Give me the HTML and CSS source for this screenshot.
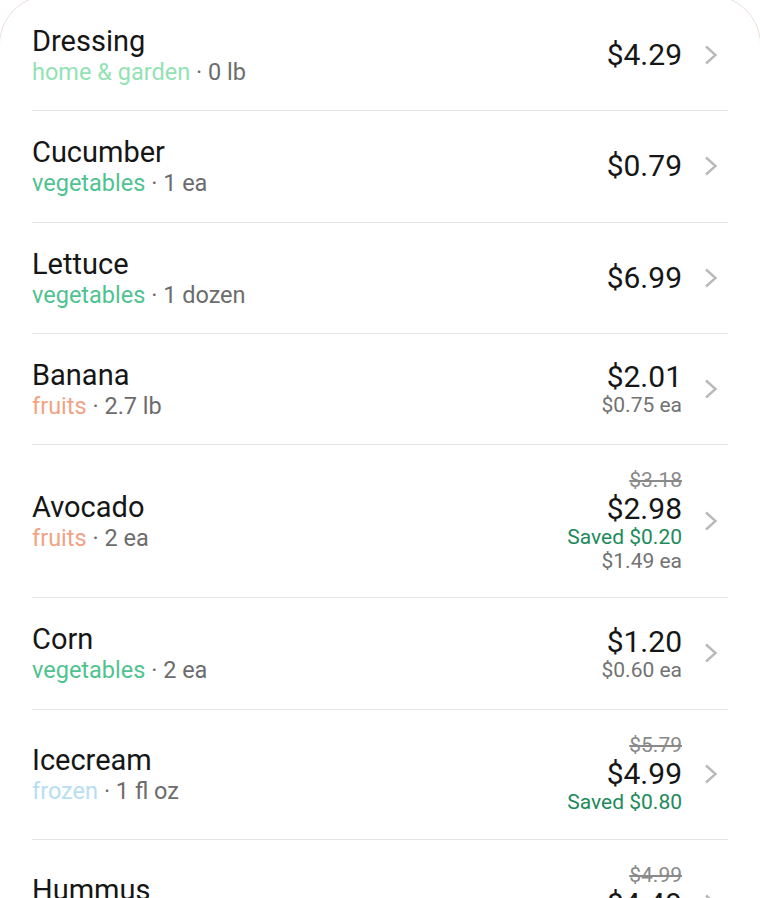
FILE: index.html
```html
<!DOCTYPE html>
<html lang="en">
<head>
  <meta charset="UTF-8">
  <meta name="viewport" content="width=device-width, initial-scale=1.0">
  <title>Shopping List</title>
  <link rel="stylesheet" href="styles.css">
</head>
<body>
  <div class="sheet">
    <ul class="list">
      <!-- Dressing -->
      <li class="item">
        <div class="info">
          <div class="name">Dressing</div>
          <div class="meta"><span class="cat cat-home">home &amp; garden</span> · 0 lb</div>
        </div>
        <div class="price">
          <div class="total">$4.29</div>
        </div>
        <svg class="chevron" viewBox="0 0 24 24"><polyline points="7,3.5 16.5,12 7,20.5"/></svg>
      </li>

      <!-- Cucumber -->
      <li class="item">
        <div class="info">
          <div class="name">Cucumber</div>
          <div class="meta"><span class="cat cat-veg">vegetables</span> · 1 ea</div>
        </div>
        <div class="price">
          <div class="total">$0.79</div>
        </div>
        <svg class="chevron" viewBox="0 0 24 24"><polyline points="7,3.5 16.5,12 7,20.5"/></svg>
      </li>

      <!-- Lettuce -->
      <li class="item">
        <div class="info">
          <div class="name">Lettuce</div>
          <div class="meta"><span class="cat cat-veg">vegetables</span> · 1 dozen</div>
        </div>
        <div class="price">
          <div class="total">$6.99</div>
        </div>
        <svg class="chevron" viewBox="0 0 24 24"><polyline points="7,3.5 16.5,12 7,20.5"/></svg>
      </li>

      <!-- Banana -->
      <li class="item">
        <div class="info">
          <div class="name">Banana</div>
          <div class="meta"><span class="cat cat-fruit">fruits</span> · 2.7 lb</div>
        </div>
        <div class="price">
          <div class="total">$2.01</div>
          <div class="unit">$0.75 ea</div>
        </div>
        <svg class="chevron" viewBox="0 0 24 24"><polyline points="7,3.5 16.5,12 7,20.5"/></svg>
      </li>

      <!-- Avocado -->
      <li class="item">
        <div class="info">
          <div class="name">Avocado</div>
          <div class="meta"><span class="cat cat-fruit">fruits</span> · 2 ea</div>
        </div>
        <div class="price">
          <div class="was">$3.18</div>
          <div class="total">$2.98</div>
          <div class="saved">Saved $0.20</div>
          <div class="unit">$1.49 ea</div>
        </div>
        <svg class="chevron" viewBox="0 0 24 24"><polyline points="7,3.5 16.5,12 7,20.5"/></svg>
      </li>

      <!-- Corn -->
      <li class="item">
        <div class="info">
          <div class="name">Corn</div>
          <div class="meta"><span class="cat cat-veg">vegetables</span> · 2 ea</div>
        </div>
        <div class="price">
          <div class="total">$1.20</div>
          <div class="unit">$0.60 ea</div>
        </div>
        <svg class="chevron" viewBox="0 0 24 24"><polyline points="7,3.5 16.5,12 7,20.5"/></svg>
      </li>

      <!-- Icecream -->
      <li class="item">
        <div class="info">
          <div class="name">Icecream</div>
          <div class="meta"><span class="cat cat-frozen">frozen</span> · 1 fl oz</div>
        </div>
        <div class="price">
          <div class="was">$5.79</div>
          <div class="total">$4.99</div>
          <div class="saved">Saved $0.80</div>
        </div>
        <svg class="chevron" viewBox="0 0 24 24"><polyline points="7,3.5 16.5,12 7,20.5"/></svg>
      </li>

      <!-- Hummus -->
      <li class="item">
        <div class="info">
          <div class="name">Hummus</div>
          <div class="meta"><span class="cat cat-deli">deli</span> · 1 ea</div>
        </div>
        <div class="price">
          <div class="was">$4.99</div>
          <div class="total">$4.49</div>
          <div class="saved">Saved $0.50</div>
        </div>
        <svg class="chevron" viewBox="0 0 24 24"><polyline points="7,3.5 16.5,12 7,20.5"/></svg>
      </li>
    </ul>
  </div>
</body>
</html>
```

FILE: styles.css
```css
body {
  margin: 0;
  background: #fff;
  font-family: Roboto, "Liberation Sans", sans-serif;
  overflow: hidden;
}

/* Bottom sheet with rounded top corners, edges pushed just off screen */
.sheet {
  margin: -5px -1px 0;
  border: 1px solid #ece0dc;
  border-bottom: none;
  border-radius: 50px 50px 0 0;
  background: #fff;
  padding-top: 4px;
}

.list {
  list-style: none;
  margin: 0;
  padding: 0 0 0 32px;
}

.item {
  display: flex;
  align-items: center;
  width: 696px;
  padding: 24px 0 24.3px;
  border-bottom: 1px solid #e4e4e4;
}

.info {
  flex: 1;
}

.name {
  font-size: 29px;
  line-height: 34px;
  color: #161616;
}

.meta {
  font-size: 23.5px;
  line-height: 28px;
  color: #6c6c6c;
}

.cat-home   { color: #93e2b4; }
.cat-veg    { color: #4fc38f; }
.cat-fruit  { color: #f1a384; }
.cat-frozen { color: #b7def2; }
.cat-deli   { color: #e6b86a; }

.price {
  text-align: right;
}

.total {
  font-size: 30px;
  line-height: 34px;
  color: #161616;
}

.was,
.saved,
.unit {
  font-size: 21px;
  line-height: 23.3px;
}

.was {
  color: #8a8a8a;
  text-decoration: line-through;
}

.saved {
  color: #1d8a5c;
}

.unit {
  color: #727272;
}

.chevron {
  width: 24px;
  height: 24px;
  margin: 0 5px 0 17px;
  fill: none;
  stroke: #b9b9b9;
  stroke-width: 2.4;
}
```
